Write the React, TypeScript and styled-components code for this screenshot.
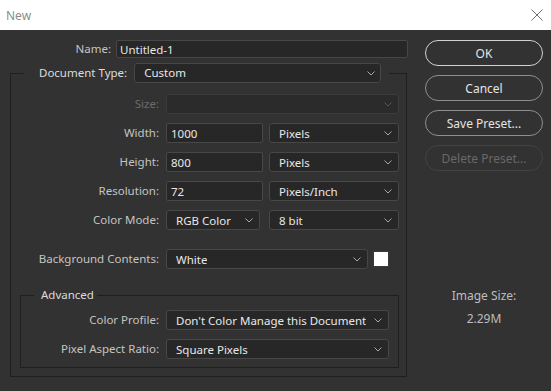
import React from "react";
import styled, { createGlobalStyle, css } from "styled-components";

const Global = createGlobalStyle`
  html, body { margin: 0; padding: 0; background: #323232; }
  body { font-family: "Noto Sans", "Segoe UI", sans-serif; font-size: 11.5px; }
  * { box-sizing: border-box; }
`;

const Window = styled.div`
  width: 551px;
  height: 391px;
  display: flex;
  flex-direction: column;
  background: #323232;
  overflow: hidden;
`;

const TitleBar = styled.div`
  height: 30px;
  flex: none;
  background: #ffffff;
  display: flex;
  align-items: center;
  justify-content: space-between;
  padding: 0 8px 0 6px;
  color: #8c8c8c;
  font-size: 12px;
`;

const Body = styled.div`
  flex: 1;
  display: flex;
  align-items: flex-start;
  gap: 18px;
  padding: 10px 8px 0 10px;
`;

const LeftCol = styled.div`
  width: 397px;
  display: flex;
  flex-direction: column;
`;

const NameRow = styled.div`
  display: grid;
  grid-template-columns: 101px 292px;
  column-gap: 5px;
  align-items: center;
  height: 18px;
`;

const Label = styled.span<{ $disabled?: boolean; $bright?: boolean }>`
  text-align: right;
  white-space: nowrap;
  line-height: 16px;
  color: ${(p) => (p.$disabled ? "#6b6b6b" : p.$bright ? "#dcdcdc" : "#c4c4c4")};
`;

const TextField = styled.input<{ $w?: number; $h?: number; $pad?: number }>`
  width: ${(p) => (p.$w ? `${p.$w}px` : "100%")};
  height: ${(p) => p.$h ?? 20}px;
  margin: 0;
  padding: 0 0 0 ${(p) => p.$pad ?? 4}px;
  background: #272727;
  border: 1px solid #474747;
  border-radius: 2px;
  color: #e8e8e8;
  font: inherit;
  outline: none;
`;

const SelectBox = styled.div<{ $w?: number; $disabled?: boolean; $chev?: number }>`
  width: ${(p) => (p.$w ? `${p.$w}px` : "100%")};
  flex: ${(p) => (p.$w ? "none" : "1")};
  height: 20px;
  display: flex;
  align-items: center;
  justify-content: space-between;
  gap: 4px;
  padding: 0 ${(p) => p.$chev ?? 6}px 0 9px;
  background: #272727;
  border: 1px solid #474747;
  border-radius: 3px;
  color: #e8e8e8;
  white-space: nowrap;
  ${(p) =>
    p.$disabled &&
    css`
      background: #2b2b2b;
      border-color: #3c3c3c;
    `}
`;

const SelectValue = styled.span`
  overflow: hidden;
  min-width: 0;
`;

const Chevron = ({ dim }: { dim?: boolean }) => (
  <svg width="8" height="5" viewBox="0 0 8 5" style={{ flex: "none" }}>
    <polyline points="0.5,0.5 4,4 7.5,0.5" fill="none" stroke={dim ? "#555" : "#a8a8a8"} strokeWidth="1" />
  </svg>
);

const Group = styled.fieldset`
  margin: 0;
  padding: 0;
  border: 1px solid #1f1f1f;
  min-inline-size: 0;
`;

const OuterGroup = styled(Group)`
  margin-top: 5px;
`;

const Legend = styled.legend<{ $ml: number; $pl: number; $pr: number }>`
  margin-left: ${(p) => p.$ml}px;
  padding: 0 ${(p) => p.$pr}px 0 ${(p) => p.$pl}px;
  display: flex;
  align-items: center;
  gap: 7px;
  color: #dcdcdc;
  line-height: 16px;
`;

const GroupContent = styled.div<{ $pad: string }>`
  padding: ${(p) => p.$pad};
  display: flex;
  flex-direction: column;
`;

const Rows = styled.div`
  display: flex;
  flex-direction: column;
  gap: 9px;
`;

const Row = styled.div<{ $label: number; $mt?: number }>`
  display: grid;
  grid-template-columns: ${(p) => p.$label}px 1fr;
  column-gap: 7px;
  align-items: center;
  height: 20px;
  margin-top: ${(p) => p.$mt ?? 0}px;
`;

const Controls = styled.div<{ $gap?: number }>`
  display: flex;
  align-items: center;
  gap: ${(p) => p.$gap ?? 6}px;
`;

const Swatch = styled.div`
  width: 16px;
  height: 16px;
  background: #ffffff;
  border: 1px solid #3a3a3a;
  flex: none;
`;

const AdvancedGroup = styled(Group)`
  margin: 18px 0 8px 0;
`;

const RightCol = styled.div`
  width: 118px;
  display: flex;
  flex-direction: column;
  gap: 9px;
`;

const Button = styled.button<{ $variant?: "default" | "normal" | "disabled" }>`
  height: 26px;
  width: 100%;
  margin: 0;
  padding: 0;
  border-radius: 13px;
  background: transparent;
  font: inherit;
  font-size: 12px;
  border: 1px solid
    ${(p) => (p.$variant === "default" ? "#d2d2d2" : p.$variant === "disabled" ? "#434343" : "#8e8e8e")};
  color: ${(p) => (p.$variant === "disabled" ? "#686868" : "#e4e4e4")};
`;

const Info = styled.div`
  margin-top: 108px;
  display: flex;
  flex-direction: column;
  align-items: center;
  gap: 7px;
  color: #bdbdbd;
  font-size: 12px;
  line-height: 16px;
`;

const Select = ({
  value,
  w,
  disabled,
  chev,
}: {
  value?: string;
  w?: number;
  disabled?: boolean;
  chev?: number;
}) => (
  <SelectBox $w={w} $disabled={disabled} $chev={chev}>
    <SelectValue>{value ?? ""}</SelectValue>
    <Chevron dim={disabled} />
  </SelectBox>
);

export default function App() {
  return (
    <>
      <Global />
      <Window>
        <TitleBar>
          <span>New</span>
          <svg width="12" height="12" viewBox="0 0 12 12">
            <line x1="0.5" y1="0.5" x2="11.5" y2="11.5" stroke="#707070" strokeWidth="1" />
            <line x1="11.5" y1="0.5" x2="0.5" y2="11.5" stroke="#707070" strokeWidth="1" />
          </svg>
        </TitleBar>
        <Body>
          <LeftCol>
            <NameRow>
              <Label>Name:</Label>
              <TextField $h={18} $pad={3} readOnly value="Untitled-1" />
            </NameRow>
            <OuterGroup>
              <Legend $ml={13} $pl={15} $pr={8}>
                <Label $bright>Document Type:</Label>
                <Select value="Custom" w={247} chev={5} />
              </Legend>
              <GroupContent $pad="11px 7px 0 9px">
                <Rows>
                  <Row $label={139}>
                    <Label $disabled>Size:</Label>
                    <Select disabled />
                  </Row>
                  <Row $label={139}>
                    <Label>Width:</Label>
                    <Controls>
                      <TextField $w={97} readOnly value="1000" />
                      <Select value="Pixels" />
                    </Controls>
                  </Row>
                  <Row $label={139}>
                    <Label>Height:</Label>
                    <Controls>
                      <TextField $w={97} readOnly value="800" />
                      <Select value="Pixels" />
                    </Controls>
                  </Row>
                  <Row $label={139}>
                    <Label>Resolution:</Label>
                    <Controls>
                      <TextField $w={97} readOnly value="72" />
                      <Select value="Pixels/Inch" />
                    </Controls>
                  </Row>
                  <Row $label={139}>
                    <Label>Color Mode:</Label>
                    <Controls $gap={9}>
                      <Select value="RGB Color" w={94} />
                      <Select value="8 bit" />
                    </Controls>
                  </Row>
                </Rows>
                <Row $label={139} $mt={19}>
                  <Label>Background Contents:</Label>
                  <Controls $gap={5}>
                    <Select value="White" w={202} />
                    <Swatch />
                  </Controls>
                </Row>
                <AdvancedGroup>
                  <Legend $ml={13} $pl={7} $pr={3}>
                    Advanced
                  </Legend>
                  <GroupContent $pad="7px 9px 8px 0">
                    <Rows>
                      <Row $label={138}>
                        <Label>Color Profile:</Label>
                        <Select value="Don't Color Manage this Document" />
                      </Row>
                      <Row $label={138}>
                        <Label>Pixel Aspect Ratio:</Label>
                        <Select value="Square Pixels" />
                      </Row>
                    </Rows>
                  </GroupContent>
                </AdvancedGroup>
              </GroupContent>
            </OuterGroup>
          </LeftCol>
          <RightCol>
            <Button $variant="default">OK</Button>
            <Button>Cancel</Button>
            <Button>Save Preset...</Button>
            <Button $variant="disabled" disabled>
              Delete Preset...
            </Button>
            <Info>
              <span>Image Size:</span>
              <span>2.29M</span>
            </Info>
          </RightCol>
        </Body>
      </Window>
    </>
  );
}
